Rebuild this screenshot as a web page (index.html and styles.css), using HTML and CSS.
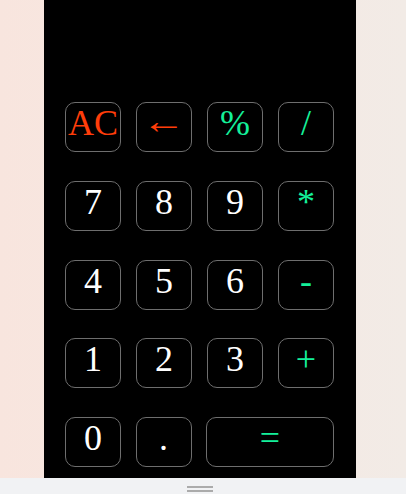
FILE: index.html
```html
<!DOCTYPE html>
<html lang="en">
<head>
<meta charset="utf-8">
<title>Calculator</title>
<link rel="stylesheet" href="styles.css">
</head>
<body>
<div class="page">
  <main class="calc">
    <div class="keys">
      <div class="row">
        <button class="key clear">AC</button>
        <button class="key clear"><span class="arrow">←</span></button>
        <button class="key op">%</button>
        <button class="key op">/</button>
      </div>
      <div class="row">
        <button class="key">7</button>
        <button class="key">8</button>
        <button class="key">9</button>
        <button class="key op">*</button>
      </div>
      <div class="row">
        <button class="key">4</button>
        <button class="key">5</button>
        <button class="key">6</button>
        <button class="key op">-</button>
      </div>
      <div class="row">
        <button class="key">1</button>
        <button class="key">2</button>
        <button class="key">3</button>
        <button class="key op">+</button>
      </div>
      <div class="row last">
        <button class="key">0</button>
        <button class="key">.</button>
        <button class="key op">=</button>
      </div>
    </div>
  </main>
</div>
<div class="sheet"><span class="grip"></span></div>
</body>
</html>
```

FILE: styles.css
```css
html, body {
  margin: 0;
  padding: 0;
  height: 100%;
  overflow: hidden;
}
body {
  background: linear-gradient(to right, #f8e5de 0%, #f5e8e2 50%, #f2ebe6 100%);
  font-family: "Liberation Serif", "Times New Roman", serif;
}
.page {
  display: flex;
  justify-content: center;
  padding-right: 6px;
  height: 478px;
}
.calc {
  width: 312px;
  background: #000;
  box-sizing: border-box;
  padding: 102px 22px 0 21px;
}
.keys {
  display: flex;
  flex-direction: column;
  gap: 28.75px;
}
.row {
  display: grid;
  grid-template-columns: repeat(4, 56px);
  column-gap: 15px;
  height: 50px;
}
.row.last {
  grid-template-columns: 56px 56px 128px;
  column-gap: 14.5px;
}
.key {
  box-sizing: border-box;
  height: 50px;
  margin: 0;
  padding: 2px 0 0;
  background: #000;
  border: 1px solid #6e6e6e;
  border-radius: 10px;
  color: #fff;
  font-family: "Liberation Serif", "Times New Roman", serif;
  font-size: 36px;
  line-height: 36px;
  display: flex;
  justify-content: center;
  align-items: flex-start;
}
.arrow {
  display: inline-block;
  transform: translateY(-2px) scaleX(1.22);
}
.clear { color: #ff3d0a; }
.op { color: #14f09a; }
.sheet {
  height: 16px;
  background: #f1f2f4;
  display: flex;
  justify-content: center;
  padding-right: 6px;
}
.grip {
  margin-top: 8px;
  width: 26px;
  height: 6px;
  border-top: 2px solid #ababab;
  border-bottom: 2px solid #ababab;
  box-sizing: border-box;
}
```
